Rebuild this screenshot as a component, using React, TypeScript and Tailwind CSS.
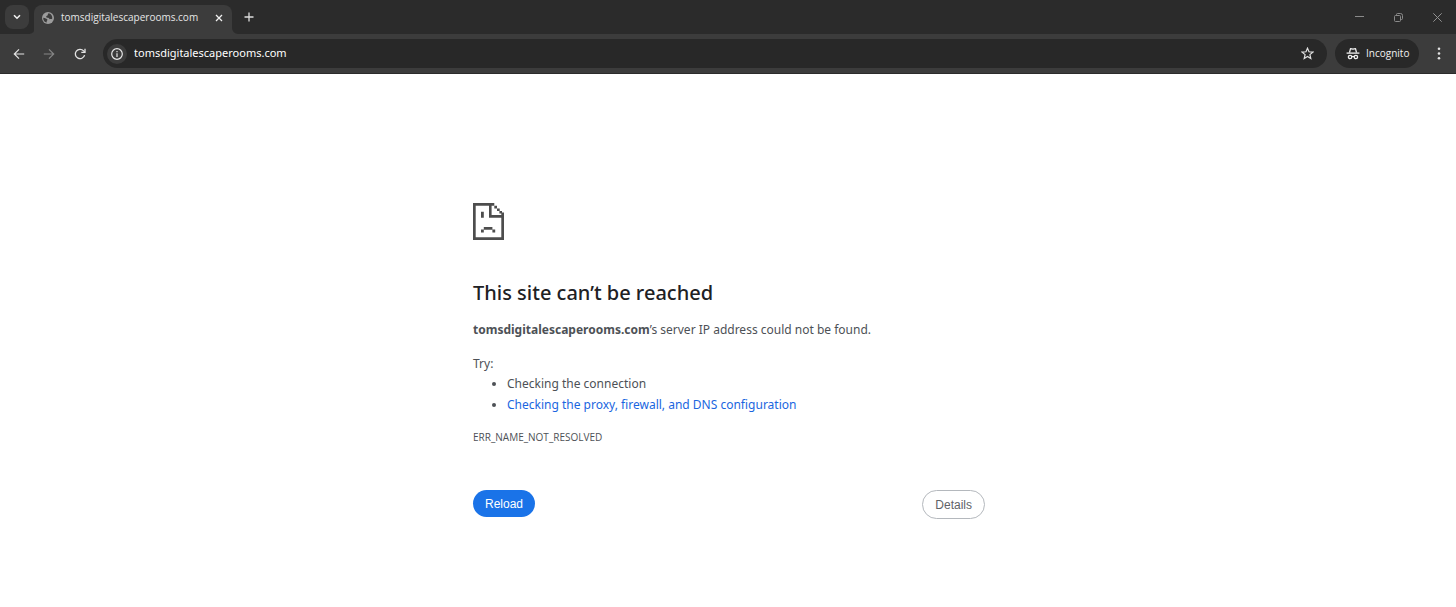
import React from "react";

const uiFont = "font-['Noto_Sans','Open_Sans',sans-serif]";

function GlobeIcon() {
  return (
    <svg viewBox="0 0 16 16" className="size-3 shrink-0" aria-hidden="true">
      <circle cx="8" cy="8" r="8" fill="#9c9c9c" />
      <path
        d="M9.2 1.8c-1 .3-1.6 1-1.4 1.9.2.8-.5 1.1-1.3 1.2-.9.1-.9 1-.8 1.7.1.8.8.9 1.7.9 1.2 0 2 .3 2.2 1.3.2.9 1 .9 1.6.6.8-.4 1.4-.2 2.3.2A6.4 6.4 0 0 0 9.2 1.8zM1.6 7.6c1.3 0 2.6.2 3.6 1 .8.7 1.9.7 2 1.7.1.8-.7 1-.9 1.8-.1.6.1 1.2.1 2A6.5 6.5 0 0 1 1.6 7.6z"
        fill="#3c3c3c"
      />
    </svg>
  );
}

function SadPageIcon() {
  return (
    <svg viewBox="0 0 31 37" className="h-[37px] w-[31px]" fill="#4d4d4d" role="img" aria-label="Page unavailable">
      <path d="M0 0H21.3V2.7H18.6V12H31V37H0zM2.7 2.7V34.3H28.3V14.7H16V2.7z" fillRule="evenodd" />
      <path d="M21.3 2.7H24V5.4h-2.7zM24 5.4h2.7V8H24zM26.4 8H29v1.4H31V12h-2.7v-1.4h-1.9z" />
      <path d="M8 8.8h2.8v6H8zM10.8 24h8.6v2.8h-8.6zM8 26.6h2.8v2.8H8zM19.4 26.6h2.8v2.8h-2.8z" />
    </svg>
  );
}

function IncognitoIcon() {
  return (
    <svg viewBox="0 0 14 14" className="size-[14px] shrink-0" fill="none" stroke="#f1f1f1" strokeWidth="1.3" aria-hidden="true">
      <path d="M3.5 5.6 4.5 1.6 7 2.1l2.5-.5 1 4" strokeLinejoin="round" />
      <path d="M.6 6.1h12.8" />
      <circle cx="4.1" cy="10" r="1.7" />
      <circle cx="9.9" cy="10" r="1.7" />
      <path d="M5.7 9.7q1.3-.7 2.6 0" />
    </svg>
  );
}

function TabStrip() {
  return (
    <div className="flex h-[34px] items-end bg-[#2b2b2b] pl-[5px]">
      <button aria-label="Search tabs" className="mb-[5px] flex size-6 shrink-0 items-center justify-center rounded-lg bg-[#3c3c3c]">
        <svg viewBox="0 0 8 6" className="h-[6px] w-2" fill="none" stroke="#f1f1f1" strokeWidth="1.6" aria-hidden="true">
          <path d="M1 1.2 4 4.2 7 1.2" />
        </svg>
      </button>
      <svg viewBox="0 0 6 6" className="-mr-px size-[6px] shrink-0" fill="#3c3c3c" aria-hidden="true">
        <path d="M6 0V6H0A6 6 0 0 0 6 0z" />
      </svg>
      <div className="flex h-[29px] w-[198px] shrink-0 items-center rounded-t-lg bg-[#3c3c3c] pb-1 pl-2 pr-[9px]">
        <GlobeIcon />
        <span className="ml-[7px] flex-1 whitespace-nowrap font-['Open_Sans',sans-serif] text-[10px] text-[#e6e6e6]">tomsdigitalescaperooms.com</span>
        <button aria-label="Close tab" className="flex size-[9px] items-center justify-center">
          <svg viewBox="0 0 8 8" className="size-2" stroke="#f1f1f1" strokeWidth="1.3" aria-hidden="true">
            <path d="M1 1 7 7M7 1 1 7" />
          </svg>
        </button>
      </div>
      <svg viewBox="0 0 6 6" className="size-[6px] shrink-0" fill="#3c3c3c" aria-hidden="true">
        <path d="M0 0V6H6A6 6 0 0 1 0 0z" />
      </svg>
      <button aria-label="New tab" className="mb-3 ml-[6px] flex size-[10px] items-center justify-center">
        <svg viewBox="0 0 10 10" className="size-[10px] shrink-0" stroke="#dedede" strokeWidth="1.3" aria-hidden="true">
          <path d="M5 .5V9.5M.5 5H9.5" />
        </svg>
      </button>
      <div className="ml-auto flex h-full items-center gap-[30px] pr-[14px]">
        <button aria-label="Minimize" className="flex size-[9px] items-center">
          <svg viewBox="0 0 9 9" className="size-[9px]" stroke="#8a8a8a" aria-hidden="true">
            <path d="M0 3.5H9" />
          </svg>
        </button>
        <button aria-label="Restore" className="flex size-[9px] items-center">
          <svg viewBox="0 0 9 9" className="size-[9px]" fill="none" stroke="#8a8a8a" aria-hidden="true">
            <rect x=".5" y="2.5" width="6" height="6" rx="1" />
            <path d="M2.5 2.2V1.5a1 1 0 0 1 1-1h3a2 2 0 0 1 2 2v3a1 1 0 0 1-1 1H7" />
          </svg>
        </button>
        <button aria-label="Close" className="flex size-[9px] items-center">
          <svg viewBox="0 0 9 9" className="size-[9px]" stroke="#929292" aria-hidden="true">
            <path d="M.3.3 8.7 8.7M8.7.3.3 8.7" />
          </svg>
        </button>
      </div>
    </div>
  );
}

function Toolbar() {
  return (
    <div className="flex h-10 items-center border-b border-[#2b2b2b] bg-[#3c3c3c] pl-[13px] pr-[15px]">
      <div className="flex shrink-0 items-center gap-[18px]">
        <button aria-label="Back" className="size-3">
          <svg viewBox="0 0 12 12" className="size-3" fill="none" stroke="#e3e3e3" strokeWidth="1.2" aria-hidden="true">
            <path d="M11.2 6H1.5M6 1.3 1.3 6 6 10.7" />
          </svg>
        </button>
        <button aria-label="Forward" className="size-3">
          <svg viewBox="0 0 12 12" className="size-3" fill="none" stroke="#858585" strokeWidth="1.2" aria-hidden="true">
            <path d="M.8 6h9.7M6 1.3 10.7 6 6 10.7" />
          </svg>
        </button>
        <button aria-label="Reload page" className="size-[14px]">
          <svg viewBox="-1 -1 14 14" className="size-[14px]" fill="none" stroke="#e3e3e3" strokeWidth="1.3" aria-hidden="true">
            <path d="M10.6 7.2A4.7 4.7 0 1 1 9.6 2.9L10.7 4" />
            <path d="M11 .8V4.4H7.3" />
          </svg>
        </button>
      </div>
      <div className="ml-4 flex h-[29px] flex-1 items-center rounded-full bg-[#282828] pl-1 pr-[13px]">
        <button aria-label="View site information" className="flex size-5 shrink-0 items-center justify-center rounded-full bg-[#3c3c3c]">
          <svg viewBox="0 0 12 12" className="size-3" fill="none" stroke="#e8e8e8" strokeWidth="1.2" aria-hidden="true">
            <circle cx="6" cy="6" r="5.3" />
            <path d="M6 5.3V9M6 3V4.3" />
          </svg>
        </button>
        <input
          aria-label="Address and search bar"
          defaultValue="tomsdigitalescaperooms.com"
          className="ml-[7px] min-w-0 flex-1 bg-transparent text-[11px] text-white outline-none"
        />
        <button aria-label="Bookmark this tab" className="size-[13px]">
          <svg viewBox="0 0 13 13" className="size-[13px]" fill="none" stroke="#e3e3e3" strokeWidth="1.2" aria-hidden="true">
            <path d="M6.5 1.2 8 4.8l3.9.3-3 2.5.9 3.8-3.3-2-3.3 2 .9-3.8-3-2.5L5 4.8z" />
          </svg>
        </button>
      </div>
      <button className="ml-2 flex h-[29px] w-[84px] shrink-0 items-center gap-[6px] rounded-full bg-[#282828] pl-[11px] font-['Open_Sans',sans-serif] text-[10px] text-[#f1f1f1]">
        <IncognitoIcon />
        Incognito
      </button>
      <button aria-label="Menu" className="ml-[18px] h-[13px] w-1 shrink-0">
        <svg viewBox="0 0 4 13" className="h-[13px] w-1" fill="#e3e3e3" aria-hidden="true">
          <circle cx="2" cy="1.8" r="1.3" />
          <circle cx="2" cy="6.5" r="1.3" />
          <circle cx="2" cy="11.2" r="1.3" />
        </svg>
      </button>
    </div>
  );
}

export default function App() {
  return (
    <div className={`min-h-screen bg-white ${uiFont}`}>
      <header>
        <TabStrip />
        <Toolbar />
      </header>
      <main className="mx-auto max-w-[514px] pl-[2px] pt-[129px] text-[12px] leading-5 text-[#4d5156]">
        <SadPageIcon />
        <h1 className="mt-[39px] text-[20px] font-medium leading-7 text-[#202124]">This site can’t be reached</h1>
        <p className="mt-[13px]">
          <strong className="font-bold">tomsdigitalescaperooms.com</strong>’s server IP address could not be found.
        </p>
        <p className="mt-[14px]">Try:</p>
        <ul className="list-disc space-y-px pl-[34px]">
          <li>Checking the connection</li>
          <li>
            <a href="#proxy" className="text-[#1a66e0]">Checking the proxy, firewall, and DNS configuration</a>
          </li>
        </ul>
        <p className="mt-3 font-['Open_Sans',sans-serif] text-[10px]">ERR_NAME_NOT_RESOLVED</p>
        <div className="mt-[43px] flex items-start justify-between font-['Liberation_Sans',sans-serif] text-[12px]">
          <button className="h-[27px] rounded-full bg-[#1a73e8] px-3 text-white">Reload</button>
          <button className="h-[29px] rounded-full border border-[#b4b8bd] px-3 text-[#5f6368]">Details</button>
        </div>
      </main>
    </div>
  );
}
